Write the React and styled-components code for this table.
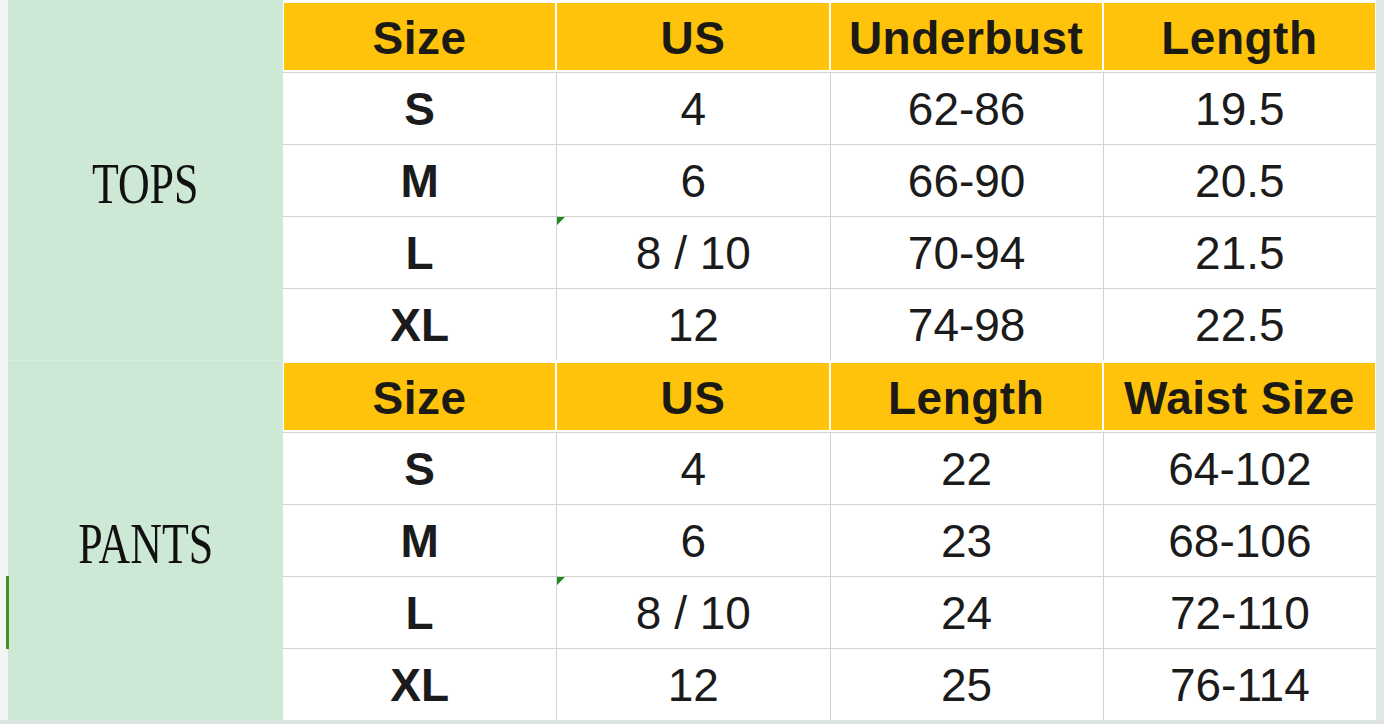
import styled, { createGlobalStyle } from 'styled-components';

const GlobalStyle = createGlobalStyle`
  html, body {
    margin: 0;
    padding: 0;
    background: #e2e8e5;
  }
  * { box-sizing: border-box; }
`;

const sections = [
    {
        label: 'TOPS',
        head: ['Size', 'US', 'Underbust', 'Length'],
        rows: [
            ['S', '4', '62-86', '19.5'],
            ['M', '6', '66-90', '20.5'],
            ['L', '8 / 10', '70-94', '21.5'],
            ['XL', '12', '74-98', '22.5'],
        ],
    },
    {
        label: 'PANTS',
        head: ['Size', 'US', 'Length', 'Waist Size'],
        rows: [
            ['S', '4', '22', '64-102'],
            ['M', '6', '23', '68-106'],
            ['L', '8 / 10', '24', '72-110'],
            ['XL', '12', '25', '76-114'],
        ],
    },
];

function App() {
    return (<>
        <GlobalStyle />
        <Page>
            <Sheet>
                <LeftEdge>
                    <Marker />
                </LeftEdge>
                <Labels>
                    {sections.map((s) => (
                        <LabelCell key={s.label}>
                            <LabelText>{s.label}</LabelText>
                        </LabelCell>
                    ))}
                </Labels>
                <Table>
                    {sections.map((s) => (
                        <Section key={s.label}>
                            <HeadRow>
                                {s.head.map((h) => (
                                    <HeadCell key={h}><span>{h}</span></HeadCell>
                                ))}
                            </HeadRow>
                            {s.rows.map((r) => (
                                <Row key={r[0]}>
                                    {r.map((c, i) => (
                                        <Cell key={i} $bold={i === 0} $flag={r[0] === 'L' && i === 1}>
                                            {c}
                                        </Cell>
                                    ))}
                                </Row>
                            ))}
                        </Section>
                    ))}
                </Table>
                <RightEdge />
            </Sheet>
            <BottomEdge />
        </Page>
    </>);
}

const Page = styled.div`
  width: 1384px;
  height: 724px;
  display: flex;
  flex-direction: column;
  background: #e2e8e5;
  overflow: hidden;
`;

const Sheet = styled.div`
  display: flex;
  flex-direction: row;
  height: 720px;
`;

const LeftEdge = styled.div`
  position: relative;
  width: 8px;
  background: #f2f5f3;
`;

const Marker = styled.div`
  position: absolute;
  left: 6px;
  top: 576px;
  width: 3px;
  height: 73px;
  background: #4b8a1c;
`;

const Labels = styled.div`
  width: 275px;
  display: flex;
  flex-direction: column;
  background: #cde8d5;
`;

const LabelCell = styled.div`
  height: 360px;
  display: flex;
  align-items: center;
  justify-content: center;
  & + & {
    border-top: 1px solid #d6ecdc;
  }
`;

const LabelText = styled.span`
  display: inline-block;
  font-family: "Liberation Serif", "Times New Roman", serif;
  font-size: 57px;
  color: #111;
  transform: scaleX(0.77);
  margin-top: 6px;
`;

const Table = styled.div`
  width: 1093px;
  background: #ffffff;
  display: flex;
  flex-direction: column;
  font-family: "Liberation Sans", Arial, sans-serif;
  color: #1b1b1b;
`;

const Section = styled.div`
  display: flex;
  flex-direction: column;
`;

const HeadRow = styled.div`
  display: grid;
  grid-template-columns: repeat(4, 1fr);
  height: 72px;
  padding-top: 2px;
  padding-bottom: 2px;
`;

const HeadCell = styled.div`
  margin: 1px 1px 0 1px;
  background: #ffc30b;
  display: flex;
  align-items: center;
  justify-content: center;
  font-weight: 700;
  font-size: 46px;
  letter-spacing: 0.5px;
  color: #1c1a14;
  span {
    margin-top: 2px;
  }
`;

const Row = styled.div`
  display: grid;
  grid-template-columns: repeat(4, 1fr);
  height: 72px;
  border-top: 1px solid #d3d3d3;
`;

const Cell = styled.div`
  position: relative;
  display: flex;
  align-items: center;
  justify-content: center;
  font-size: 46px;
  font-weight: ${(p) => (p.$bold ? 700 : 400)};
  & + & {
    border-left: 1px solid #d3d3d3;
  }
  &::before {
    content: '';
    display: ${(p) => (p.$flag ? 'block' : 'none')};
    position: absolute;
    top: 0;
    left: 0;
    border-top: 8px solid #1f8a1f;
    border-right: 8px solid transparent;
  }
`;

const RightEdge = styled.div`
  flex: 1;
  background: #e2e8e5;
`;

const BottomEdge = styled.div`
  flex: 1;
  background: #dde4e1;
`;

export default App
